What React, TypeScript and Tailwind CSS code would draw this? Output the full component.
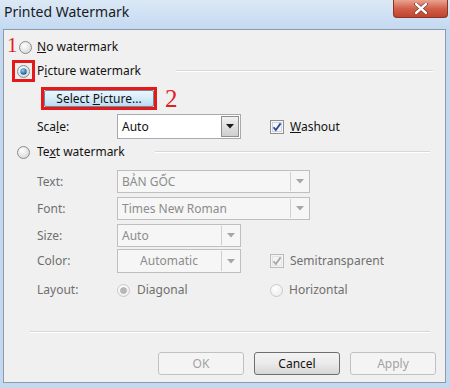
import React from "react"

function Radio({ checked = false, disabled = false }: { checked?: boolean; disabled?: boolean }) {
  const ring = disabled ? "#c9c9c9" : "#8a8c8e"
  return (
    <svg width="13" height="13" viewBox="0 0 13 13" className="shrink-0">
      <defs>
        <radialGradient id={`rg-${disabled}`} cx="0.4" cy="0.35" r="0.7">
          <stop offset="0" stopColor="#ffffff" />
          <stop offset="1" stopColor={disabled ? "#ececec" : "#d6d6d6"} />
        </radialGradient>
        <radialGradient id="dot" cx="0.4" cy="0.35" r="0.7">
          <stop offset="0" stopColor="#8ed0ff" />
          <stop offset="1" stopColor="#0b4f8f" />
        </radialGradient>
      </defs>
      <circle cx="6.5" cy="6.5" r="6" fill={`url(#rg-${disabled})`} stroke={ring} />
      {checked && !disabled && <circle cx="6.5" cy="6.5" r="3.2" fill="url(#dot)" />}
      {checked && disabled && <circle cx="6.5" cy="6.5" r="3" fill="#b8b8b8" stroke="#a0a0a0" strokeWidth="0.6" />}
    </svg>
  )
}

function Check({ disabled = false }: { disabled?: boolean }) {
  return (
    <svg width="14" height="14" viewBox="0 0 14 14" className="shrink-0">
      <rect x="0.5" y="0.5" width="13" height="13" fill={disabled ? "#f4f4f4" : "#f6f7fb"} stroke={disabled ? "#bcbcbc" : "#8e8f8f"} />
      <rect x="2.5" y="2.5" width="9" height="9" fill="none" stroke={disabled ? "#e4e4e4" : "#cfd3dc"} />
      <path
        d="M3.5 7.2 L5.8 10 L10.6 3.4"
        fill="none"
        stroke={disabled ? "#a8a8a8" : "#32469a"}
        strokeWidth="1.8"
      />
    </svg>
  )
}

function Arrow({ dark }: { dark: boolean }) {
  return (
    <svg width="8" height="5" viewBox="0 0 8 5">
      <path d="M0 0 H8 L4 4.5 Z" fill={dark ? "#1b1b1b" : "#a6a6a6"} />
    </svg>
  )
}

function Combo({
  value,
  width,
  disabled = false,
  center = false,
  white = false,
}: {
  value: string
  width: string
  disabled?: boolean
  center?: boolean
  white?: boolean
}) {
  return (
    <div
      className={`${width} h-full flex border ${disabled ? "border-[#bfbfbf]" : "border-[#a6a9ad]"} ${
        white ? "bg-white" : "bg-[#f6f6f6]"
      }`}
    >
      <div
        className={`flex-1 flex items-center px-[4px] ${center ? "justify-center" : ""} ${
          disabled ? "text-[#8c8c8c]" : "text-[#111]"
        }`}
      >
        {value}
      </div>
      {disabled ? (
        <div className="w-[18px] m-[1px] border-l border-[#d0d0d0] flex items-center justify-center">
          <Arrow dark={false} />
        </div>
      ) : (
        <div className="w-[18px] m-[1px] border border-[#8e8f8f] bg-gradient-to-b from-[#f2f2f2] to-[#cfcfcf] flex items-center justify-center">
          <Arrow dark />
        </div>
      )}
    </div>
  )
}

function Sep({ className }: { className: string }) {
  return <div className={`${className} h-[2px] border-t border-[#d8d8d8] border-b border-b-white`} />
}

export default function App() {
  return (
    <div
      className="w-[450px] h-[388px] bg-[#c4d9f0] flex flex-col text-[12px] overflow-hidden"
      style={{ fontFamily: '"Noto Sans", "Open Sans", sans-serif' }}
    >
      {/* title bar */}
      <div className="h-[29px] shrink-0 flex justify-between bg-gradient-to-b from-[#dce9f6] via-[#cfe1f4] to-[#c4d9f0]">
        <div className="pl-[4px] pt-[3px] text-[14px] text-[#1a1a1a] leading-[18px]">Printed Watermark</div>
        <div className="mr-[2px] w-[55px] h-[18px] rounded-b-[4px] border border-t-0 border-[#8c3325] bg-gradient-to-b from-[#e9a391] via-[#d2604a] to-[#c0422f] flex items-center justify-center">
          <svg width="14" height="11" viewBox="0 0 14 11">
            <path d="M2 1 L12 10 M12 1 L2 10" stroke="#5a2018" strokeWidth="3.6" strokeLinecap="round" />
            <path d="M2 1 L12 10 M12 1 L2 10" stroke="#ffffff" strokeWidth="2.4" strokeLinecap="round" />
          </svg>
        </div>
      </div>

      {/* client area */}
      <div className="ml-[3px] mr-[4px] h-[354px] shrink-0 border border-[#8d9aab] bg-[#f0f0f0] flex flex-col text-[#121212]">
        {/* no watermark */}
        <div className="mt-[7px] h-[20px] flex items-center relative">
          <span className="absolute left-[3px] top-[-4px] text-[#e0201f] text-[21px] leading-[24px]" style={{ fontFamily: '"Liberation Serif", serif' }}>
            1
          </span>
          <div className="ml-[15px]">
            <Radio />
          </div>
          <span className="ml-[5px]">
            <u>N</u>o watermark
          </span>
        </div>

        {/* picture watermark */}
        <div className="mt-[4px] h-[20px] flex items-center">
          <div className="ml-[8px] w-[23px] h-[22px] border-[3px] border-[#e3191b] flex items-center justify-center">
            <Radio checked />
          </div>
          <span className="ml-[2px]">
            P<u>i</u>cture watermark
          </span>
          <Sep className="ml-[35px] w-[257px]" />
        </div>

        {/* select picture */}
        <div className="mt-[6px] h-[23px] flex items-center">
          <div className="ml-[37px] w-[116px] h-[23px] border-[3px] border-[#e3191b] p-0">
            <div className="h-full border border-[#7a8594] rounded-[2px] bg-gradient-to-b from-[#eaf5fc] via-[#d6ecf9] to-[#b9dcf3] flex items-center justify-center">
              Select <u className="ml-[3px]">P</u>icture...
            </div>
          </div>
          <span className="ml-[8px] text-[#e0201f] text-[25px] leading-[24px]" style={{ fontFamily: '"Liberation Serif", serif' }}>
            2
          </span>
        </div>

        {/* scale */}
        <div className="mt-[4px] h-[25px] flex items-center">
          <span className="ml-[33px] w-[80px]">
            Sca<u>l</u>e:
          </span>
          <Combo value="Auto" width="w-[124px]" white />
          <div className="ml-[29px] flex items-center">
            <Check />
            <span className="ml-[6px]">
              <u>W</u>ashout
            </span>
          </div>
        </div>

        {/* text watermark */}
        <div className="mt-[3px] h-[20px] flex items-center">
          <div className="ml-[13px]">
            <Radio />
          </div>
          <span className="ml-[7px]">
            Te<u>x</u>t watermark
          </span>
          <Sep className="ml-[30px] w-[275px]" />
        </div>

        <div className="text-[#6f6f6f] flex flex-col">
          <div className="mt-[8px] h-[23px] flex items-center">
            <span className="ml-[33px] w-[80px]">Text:</span>
            <Combo value="BẢN GỐC" width="w-[193px]" disabled />
          </div>
          <div className="mt-[4px] h-[23px] flex items-center">
            <span className="ml-[33px] w-[80px]">Font:</span>
            <Combo value="Times New Roman" width="w-[193px]" disabled />
          </div>
          <div className="mt-[4px] h-[23px] flex items-center">
            <span className="ml-[33px] w-[80px]">Size:</span>
            <Combo value="Auto" width="w-[124px]" disabled />
          </div>
          <div className="mt-[2px] h-[24px] flex items-center">
            <span className="ml-[33px] w-[80px]">Color:</span>
            <Combo value="Automatic" width="w-[124px]" disabled center />
            <div className="ml-[29px] flex items-center">
              <Check disabled />
              <span className="ml-[6px]">Semitransparent</span>
            </div>
          </div>
          <div className="mt-[7px] h-[20px] flex items-center">
            <span className="ml-[33px] w-[80px]">Layout:</span>
            <div className="w-[153px] flex items-center">
              <Radio checked disabled />
              <span className="ml-[7px]">Diagonal</span>
            </div>
            <div className="flex items-center">
              <Radio disabled />
              <span className="ml-[6px]">Horizontal</span>
            </div>
          </div>
        </div>

        <Sep className="mt-[31px] ml-[26px] w-[400px]" />

        {/* buttons */}
        <div className="mt-[19px] h-[23px] flex justify-end pr-[9px] gap-[10px]">
          <div className="w-[86px] h-full rounded-[3px] border border-[#bfc2c5] bg-[#f4f4f4] text-[#a3a3a3] flex items-center justify-center">
            OK
          </div>
          <div className="w-[86px] h-full rounded-[3px] border border-[#6f6f6f] bg-gradient-to-b from-[#f3f3f3] via-[#ebebeb] to-[#d6d6d6] text-[#111] flex items-center justify-center">
            Cancel
          </div>
          <div className="w-[86px] h-full rounded-[3px] border border-[#bfc2c5] bg-[#f4f4f4] text-[#a3a3a3] flex items-center justify-center">
            Apply
          </div>
        </div>
      </div>
    </div>
  )
}
